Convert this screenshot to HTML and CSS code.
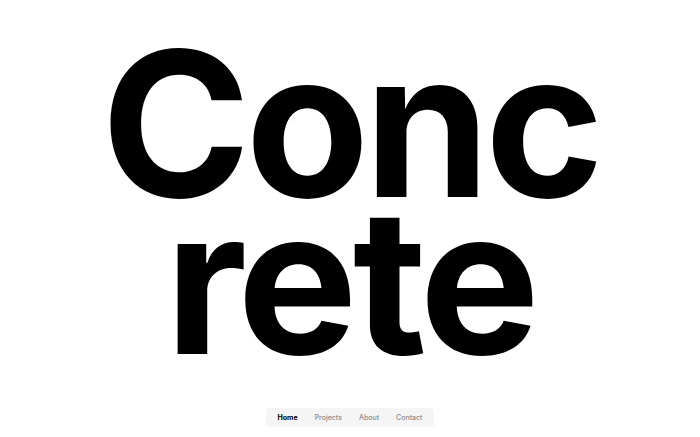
FILE: index.html
```html
<!DOCTYPE html>
<html lang="en">
<head>
<meta charset="UTF-8">
<meta name="viewport" content="width=device-width, initial-scale=1.0">
<title>Concrete</title>
<link rel="stylesheet" href="styles.css">
</head>
<body>
<div class="page">
    <h1 class="title">
        <span class="line">Conc</span>
        <span class="line">rete</span>
    </h1>

    <nav class="nav">
        <a href="#" class="nav-link active">Home</a>
        <a href="#" class="nav-link">Projects</a>
        <a href="#" class="nav-link">About</a>
        <a href="#" class="nav-link">Contact</a>
    </nav>
</div>
</body>
</html>
```
FILE: styles.css
```css
body {
    margin: 0;
    background-color: #fff;
    font-family: Inter, "Liberation Sans", Arial, sans-serif;
}

.page {
    height: 437px;
    display: flex;
    flex-direction: column;
    align-items: center;
}

.title {
    margin: 45px 0 0 0;
    font-size: 202px;
    font-weight: 700;
    line-height: 157px;
    letter-spacing: -0.025em;
    text-align: center;
    color: #000;
}

.line {
    display: block;
}

.nav {
    margin-top: auto;
    margin-bottom: 10px;
    display: flex;
    gap: 17px;
    padding: 0 12px;
    height: 19px;
    align-items: center;
    background-color: #f5f5f5;
    border-radius: 4px;
}

.nav-link {
    font-size: 7px;
    font-weight: 500;
    color: #8c8c8c;
    text-decoration: none;
}

.nav-link.active {
    color: #000;
    font-weight: 700;
}
```
